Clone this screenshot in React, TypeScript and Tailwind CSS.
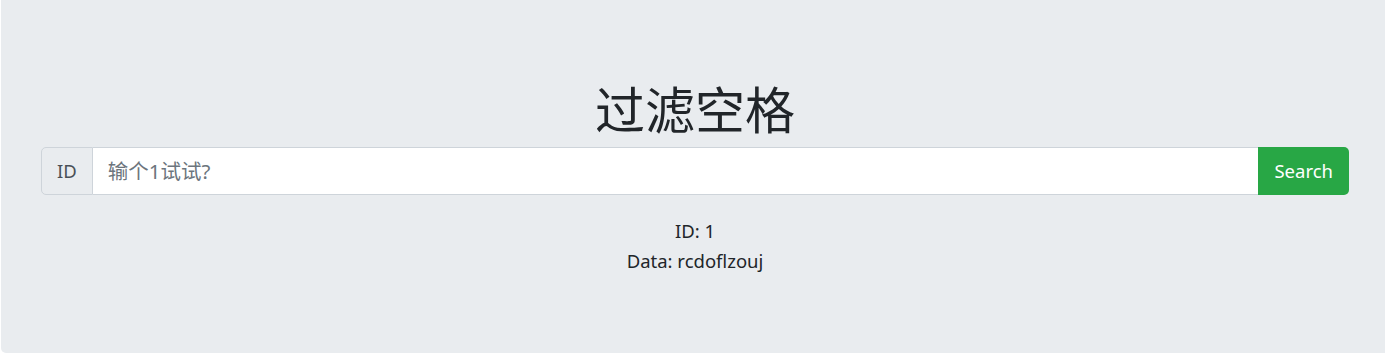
import React from 'react';

const App = () => {
    return (
        <div className="w-full h-[354px] bg-white pl-[1px] overflow-hidden" style={{ fontFamily: '"Noto Sans", "Noto Sans CJK SC", sans-serif' }}>
            <div className="h-[353px] bg-[#e9ecef] rounded-bl-[5px] pt-[77px] pl-[40px] pr-[36px] flex flex-col">
                {/* 标题 */}
                <h1 className="text-[50px] leading-[67px] font-normal text-[#212529] text-center">过滤空格</h1>

                {/* 搜索栏 */}
                <form className="mt-[3px] flex flex-row h-[48px]" onSubmit={e => e.preventDefault()}>
                    <span className="flex items-center px-[15px] bg-[#e9ecef] border border-[#ced4da] rounded-l-[5px] text-[18.5px] text-[#495057]">ID</span>
                    <input
                        type="text"
                        placeholder="输个1试试?"
                        className="flex-1 bg-white border-y border-[#ced4da] px-[15px] text-[20.5px] text-[#495057] outline-none placeholder:text-[#6c757d]"
                    />
                    <button type="submit" className="px-[16px] bg-[#28a745] text-white text-[18.5px] rounded-r-[5px]">Search</button>
                </form>

                {/* 结果 */}
                <div className="mt-[21px] text-center text-[18.5px] leading-[30px] text-[#212529]">
                    <p>ID: 1</p>
                    <p>Data: rcdoflzouj</p>
                </div>
            </div>
        </div>
    );
};

export default App;
